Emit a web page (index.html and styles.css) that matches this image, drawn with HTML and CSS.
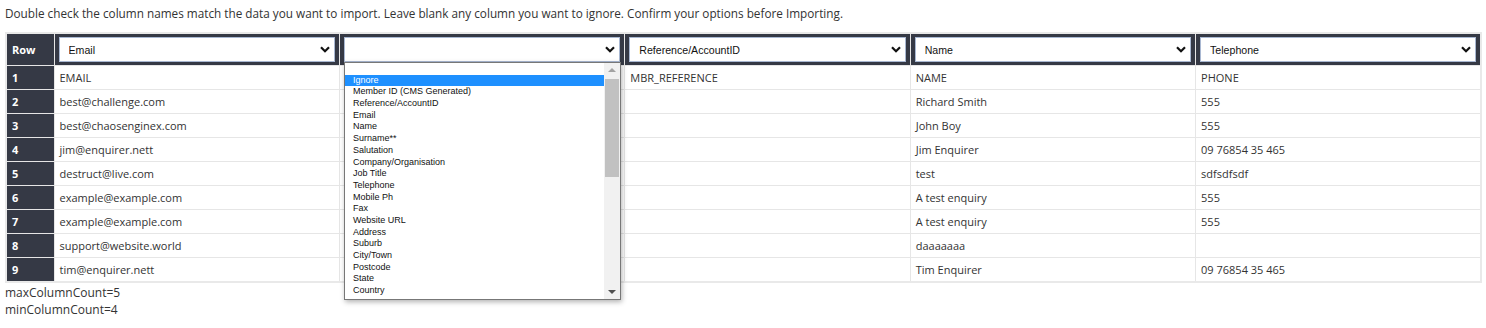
FILE: index.html
```html
<!DOCTYPE html>
<html lang="en">
<head>
    <meta charset="UTF-8">
    <meta name="viewport" content="width=device-width, initial-scale=1.0">
    <title>Import Members</title>
    <link rel="stylesheet" href="styles.css">
</head>
<body>

    <p class="intro">Double check the column names match the data you want to import. Leave blank any column you want to ignore. Confirm your options before Importing.</p>

    <table class="import-table">
        <colgroup>
            <col class="col-row">
            <col><col><col><col><col>
        </colgroup>
        <thead>
            <tr>
                <th class="row-head">Row</th>
                <th>
                    <div class="pick">
                        <select><option>Email</option></select>
                        <svg class="chev" width="10" height="7" viewBox="0 0 10 7"><path d="M1 1.2 L5 5.2 L9 1.2" fill="none" stroke="#111" stroke-width="2.2"/></svg>
                    </div>
                </th>
                <th class="open">
                    <div class="pick">
                        <select><option></option></select>
                        <svg class="chev" width="10" height="7" viewBox="0 0 10 7"><path d="M1 1.2 L5 5.2 L9 1.2" fill="none" stroke="#111" stroke-width="2.2"/></svg>
                    </div>
                    <!-- open dropdown list -->
                    <div class="dropdown">
                        <ul class="options">
                            <li></li>
                            <li class="selected">Ignore</li>
                            <li>Member ID (CMS Generated)</li>
                            <li>Reference/AccountID</li>
                            <li>Email</li>
                            <li>Name</li>
                            <li>Surname**</li>
                            <li>Salutation</li>
                            <li>Company/Organisation</li>
                            <li>Job Title</li>
                            <li>Telephone</li>
                            <li>Mobile Ph</li>
                            <li>Fax</li>
                            <li>Website URL</li>
                            <li>Address</li>
                            <li>Suburb</li>
                            <li>City/Town</li>
                            <li>Postcode</li>
                            <li>State</li>
                            <li>Country</li>
                        </ul>
                        <div class="scrollbar">
                            <div class="arrow up"></div>
                            <div class="track"><div class="thumb"></div></div>
                            <div class="arrow down"></div>
                        </div>
                    </div>
                </th>
                <th>
                    <div class="pick">
                        <select><option>Reference/AccountID</option></select>
                        <svg class="chev" width="10" height="7" viewBox="0 0 10 7"><path d="M1 1.2 L5 5.2 L9 1.2" fill="none" stroke="#111" stroke-width="2.2"/></svg>
                    </div>
                </th>
                <th>
                    <div class="pick">
                        <select><option>Name</option></select>
                        <svg class="chev" width="10" height="7" viewBox="0 0 10 7"><path d="M1 1.2 L5 5.2 L9 1.2" fill="none" stroke="#111" stroke-width="2.2"/></svg>
                    </div>
                </th>
                <th>
                    <div class="pick">
                        <select><option>Telephone</option></select>
                        <svg class="chev" width="10" height="7" viewBox="0 0 10 7"><path d="M1 1.2 L5 5.2 L9 1.2" fill="none" stroke="#111" stroke-width="2.2"/></svg>
                    </div>
                </th>
            </tr>
        </thead>
        <tbody>
            <tr><td class="num">1</td><td>EMAIL</td><td></td><td>MBR_REFERENCE</td><td>NAME</td><td>PHONE</td></tr>
            <tr><td class="num">2</td><td>best@challenge.com</td><td></td><td></td><td>Richard Smith</td><td>555</td></tr>
            <tr><td class="num">3</td><td>best@chaosenginex.com</td><td></td><td></td><td>John Boy</td><td>555</td></tr>
            <tr><td class="num">4</td><td>jim@enquirer.nett</td><td></td><td></td><td>Jim Enquirer</td><td>09 76854 35 465</td></tr>
            <tr><td class="num">5</td><td>destruct@live.com</td><td></td><td></td><td>test</td><td>sdfsdfsdf</td></tr>
            <tr><td class="num">6</td><td>example@example.com</td><td></td><td></td><td>A test enquiry</td><td>555</td></tr>
            <tr><td class="num">7</td><td>example@example.com</td><td></td><td></td><td>A test enquiry</td><td>555</td></tr>
            <tr><td class="num">8</td><td>support@website.world</td><td></td><td></td><td>daaaaaaa</td><td></td></tr>
            <tr><td class="num">9</td><td>tim@enquirer.nett</td><td></td><td></td><td>Tim Enquirer</td><td>09 76854 35 465</td></tr>
        </tbody>
    </table>

    <div class="counts">
        <div>maxColumnCount=5</div>
        <div>minColumnCount=4</div>
    </div>

</body>
</html>
```

FILE: styles.css
```css
body {
    margin: 0;
    padding: 5px;
    font-family: "Open Sans", Arial, sans-serif;
    font-size: 12px;
    color: #333;
    background: #fff;
}
.intro {
    margin: 0 0 11px 0;
    font-size: 11.75px;
    line-height: 16px;
}
.import-table {
    width: 1477px;
    border-collapse: collapse;
    table-layout: fixed;
    border: 2px solid #e9e9e9;
}
.col-row {
    width: 48px;
}
.import-table th,
.import-table td {
    border: 1px solid #e6e6e6;
}
.import-table th {
    background: #353945;
    padding: 3px 4px;
    height: 25px;
    text-align: left;
}
.import-table th.row-head {
    color: #fff;
    font-size: 11px;
    font-weight: bold;
    padding-left: 5px;
}
.import-table th.open {
    position: relative;
}
.pick {
    position: relative;
}
.pick select {
    display: block;
    width: 100%;
    height: 25px;
    margin: 0;
    padding: 0 0 0 9px;
    border: 1px solid #a9b8d2;
    border-radius: 0;
    background: #fff;
    font-family: Arial, "Liberation Sans", sans-serif;
    font-size: 10.6px;
    color: #111;
    -webkit-appearance: none;
    appearance: none;
}
.pick .chev {
    position: absolute;
    right: 5px;
    top: 9px;
}
.import-table td {
    height: 23px;
    padding: 0 0 0 5px;
    font-size: 11px;
    color: #333;
    white-space: nowrap;
}
.import-table td.num {
    background: #353945;
    color: #fff;
    font-weight: bold;
    padding-left: 5px;
}
.dropdown {
    position: absolute;
    left: 4px;
    top: 28px;
    width: 275px;
    height: 236px;
    border: 1px solid #777;
    background: #fff;
    box-shadow: 1px 2px 5px rgba(0, 0, 0, 0.3);
    display: flex;
    z-index: 5;
}
.options {
    list-style: none;
    margin: 0;
    padding: 0;
    flex: 1;
    font-family: Arial, "Liberation Sans", sans-serif;
    font-size: 9px;
    font-weight: normal;
    color: #111;
}
.options li {
    height: 11.7px;
    line-height: 11.7px;
    padding-left: 8px;
}
.options li.selected {
    background: #1e90ff;
    color: #fff;
}
.scrollbar {
    width: 16px;
    background: #f1f1f1;
    display: flex;
    flex-direction: column;
}
.scrollbar .arrow {
    height: 14px;
    display: flex;
    align-items: center;
    justify-content: center;
}
.scrollbar .arrow::before {
    content: "";
    border-left: 4px solid transparent;
    border-right: 4px solid transparent;
}
.scrollbar .up::before {
    border-bottom: 4px solid #a3a3a3;
}
.scrollbar .down::before {
    border-top: 4px solid #505050;
}
.scrollbar .track {
    flex: 1;
    padding: 2px 1px 0 1px;
}
.scrollbar .thumb {
    height: 98px;
    background: #c1c1c1;
}
.counts {
    margin-top: 1px;
    line-height: 17px;
}
```
